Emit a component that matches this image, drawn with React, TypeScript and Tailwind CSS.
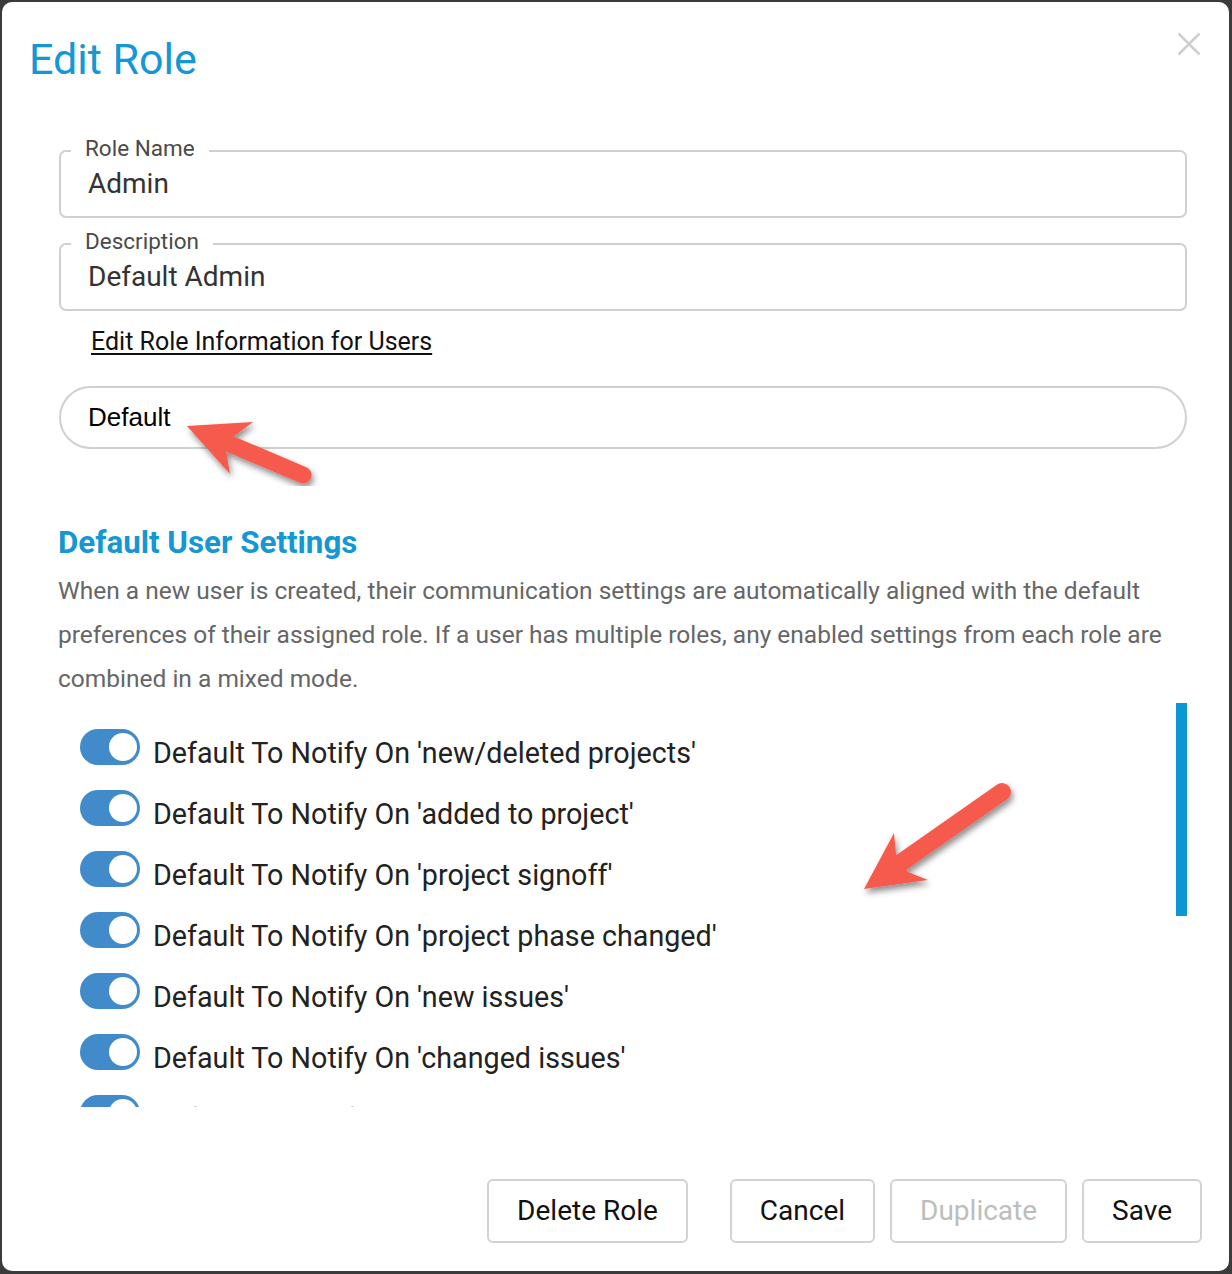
import React from "react";

const notifySettings = [
  "Default To Notify On 'new/deleted projects'",
  "Default To Notify On 'added to project'",
  "Default To Notify On 'project signoff'",
  "Default To Notify On 'project phase changed'",
  "Default To Notify On 'new issues'",
  "Default To Notify On 'changed issues'",
  "Default To Notify On 'new comments'",
  "Default To Notify On 'new files'",
  "Default To Notify On 'changed files'",
  "Default To Notify On 'deleted files'",
  "Default To Notify On 'new tasks'",
  "Default To Notify On 'overdue tasks'",
];

const Toggle: React.FC = () => (
  <span className="flex h-[36px] w-[60px] shrink-0 items-center justify-end rounded-full bg-[#428bca] pr-[3px]">
    <span className="h-[28px] w-[28px] rounded-full bg-white" />
  </span>
);

const OutlinedField: React.FC<{ label: string; value: string; className?: string }> = ({
  label,
  value,
  className,
}) => (
  <div
    className={
      "relative flex h-[68px] items-center rounded-[7px] border-2 border-[#d0d0d0] pl-[27px] " +
      (className || "")
    }
  >
    {/* notched label sitting on the top border */}
    <span className="absolute -top-[17px] left-[10px] bg-white px-[14px] text-[22.5px] leading-[26px] text-[#4a4a4a]">
      {label}
    </span>
    <span className="text-[28px] leading-[32px] text-[#333]">{value}</span>
  </div>
);

const btn = "h-[64px] rounded-[6px] border-2 border-[#d2d2d2] px-[28px] text-[28px]";

export default function App() {
  return (
    <div className="h-[1274px] w-[1232px] bg-[#3b3b3b] pt-[2px] pr-[3px] pb-[3px] pl-[2px] font-['Roboto',sans-serif]">
      <div className="relative flex h-full flex-col rounded-[10px] bg-white">
        {/* header */}
        <div className="flex items-start justify-between pt-[33px] pl-[27px] pr-[28px]">
          <h1 className="text-[43px] leading-[48px] font-normal text-[#1597d3]">Edit Role</h1>
          <button className="mt-[-3px] text-[#cfcfcf]">
            <svg width="24" height="24" viewBox="0 0 24 24" stroke="currentColor" strokeWidth="2.6" fill="none">
              <path d="M1.5 1.5 22.5 22.5M22.5 1.5 1.5 22.5" />
            </svg>
          </button>
        </div>

        <div className="pl-[57px] pr-[42px]">
          <OutlinedField className="mt-[67px]" label="Role Name" value="Admin" />
          <OutlinedField className="mt-[25px]" label="Description" value="Default Admin" />

          <a
            href="#"
            className="mt-[17px] ml-[32px] block w-fit text-[25px] leading-[28px] text-[#111] underline underline-offset-[3px]"
          >
            Edit Role Information for Users
          </a>

          <div className="mt-[30px] flex h-[63px] items-center rounded-full border-2 border-[#d0d0d0] pl-[27px]">
            <span className="font-['Liberation_Sans',Arial,sans-serif] text-[26px] text-black">Default</span>
          </div>

          <h2 className="mt-[76px] -ml-[1px] text-[31.3px] leading-[36px] font-bold text-[#1597d3]">
            Default User Settings
          </h2>
          <p className="mt-[8px] -ml-[1px] text-[24.5px] leading-[44px] text-[#666]">
            When a new user is created, their communication settings are automatically aligned with the default
            preferences of their assigned role. If a user has multiple roles, any enabled settings from each role are
            combined in a mixed mode.
          </p>

          {/* settings list with custom scrollbar thumb */}
          <div className="relative mt-[2px] h-[404px]">
            <div className="h-full overflow-y-auto pt-[26px] pl-[21px] [scrollbar-width:none]">
              <div className="flex flex-col gap-[25px]">
                {notifySettings.map((s) => (
                  <div key={s} className="flex h-[36px] items-start gap-[13px]">
                    <Toggle />
                    <span className="pt-[6px] text-[28.7px] leading-[36px] whitespace-nowrap text-[#222]">{s}</span>
                  </div>
                ))}
              </div>
            </div>
            <div className="absolute top-0 right-0 h-[213px] w-[11px] bg-[#0b97d4]" />
          </div>
        </div>

        {/* footer */}
        <div className="mt-auto flex justify-end pr-[27px] pb-[28px]">
          <button className={btn + " mr-[42px] text-[#111]"}>Delete Role</button>
          <div className="flex gap-[15px]">
            <button className={btn + " text-[#111]"}>Cancel</button>
            <button className={btn + " text-[#bdbdbd]"}>Duplicate</button>
            <button className={btn + " text-[#111]"}>Save</button>
          </div>
        </div>

        {/* annotation arrows drawn over the dialog */}
        <svg
          className="pointer-events-none absolute top-[-2px] left-[-2px]"
          width="1232"
          height="1274"
          viewBox="0 0 1232 1274"
        >
          <defs>
            <filter id="arrowShadow" x="-20%" y="-20%" width="140%" height="140%">
              <feDropShadow dx="2" dy="4" stdDeviation="3" floodColor="#000" floodOpacity="0.45" />
            </filter>
          </defs>
          <g fill="#f65a4d" stroke="#f65a4d" filter="url(#arrowShadow)">
            <line x1="303" y1="475" x2="230" y2="444" strokeWidth="17" strokeLinecap="round" />
            <polygon strokeWidth="0" points="187,426 253,422 233,437 226,451 230,474" />
          </g>
          <g fill="#f65a4d" stroke="#f65a4d" filter="url(#arrowShadow)">
            <line x1="1002" y1="792" x2="902" y2="862" strokeWidth="18" strokeLinecap="round" />
            <polygon strokeWidth="0" points="864,889 894,833 896,854 908,872 928,880" />
          </g>
        </svg>
      </div>
    </div>
  );
}
